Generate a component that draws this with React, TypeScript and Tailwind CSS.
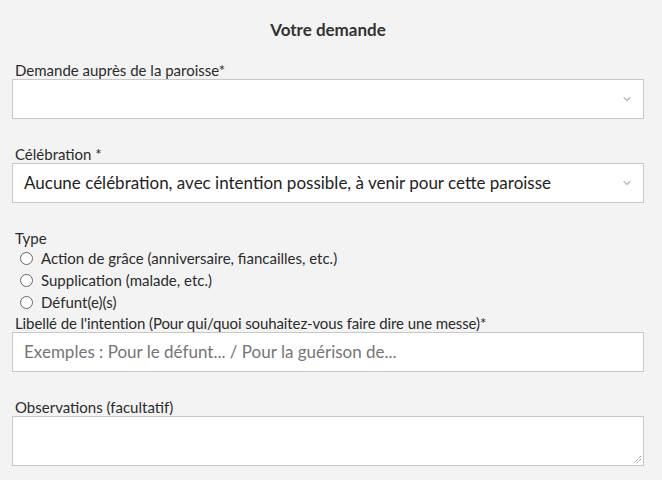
import { ChevronDown } from "lucide-react";

const font = { fontFamily: "Lato, 'Noto Sans', sans-serif" };

function Label({ children, className = "" }: { children: React.ReactNode; className?: string }) {
  return <div className={"h-[18px] text-[15px] leading-[18px] text-[#2b2b2b]" + " " + className}>{children}</div>;
}

function SelectBox({ value }: { value?: string }) {
  return (
    <div className="flex h-[40px] items-center justify-between border border-[#c8c8c8] bg-white pl-[11px] pr-[10px]">
      <span className="text-[17px] text-[#1e1e1e]">{value}</span>
      <ChevronDown className="h-[12px] w-[12px] text-[#bbb]" strokeWidth={2.5} />
    </div>
  );
}

const types = [
  "Action de grâce (anniversaire, fiancailles, etc.)",
  "Supplication (malade, etc.)",
  "Défunt(e)(s)",
];

export default function App() {
  return (
    <div style={font} className="h-[480px] w-[662px] overflow-hidden bg-[#f3f3f3] pl-[12px] pr-[18px]">
      <div className="mt-[20px] h-[20px] text-center text-[17px] font-bold leading-[20px] text-[#333]">
        Votre demande
      </div>

      <Label className="mt-[21px] pl-[3px]">Demande auprès de la paroisse*</Label>
      <SelectBox />

      <Label className="mt-[26px] pl-[3px]">Célébration *</Label>
      <SelectBox value="Aucune célébration, avec intention possible, à venir pour cette paroisse" />

      <Label className="mt-[26px] pl-[3px]">Type</Label>
      <div className="flex flex-col">
        {types.map((t) => (
          <label key={t} className="flex h-[22px] items-center text-[15px] text-[#2b2b2b]">
            <span className="ml-[8px] mr-[8px] h-[13px] w-[13px] rounded-full border border-[#666] bg-white" />
            {t}
          </label>
        ))}
      </div>

      <Label className="mt-[1px] pl-[3px] tracking-[-0.1px]">
        Libellé de l'intention (Pour qui/quoi souhaitez-vous faire dire une messe)*
      </Label>
      <div className="flex h-[40px] items-center border border-[#c8c8c8] bg-white pl-[11px]">
        <span className="text-[17px] text-[#757575]">Exemples : Pour le défunt... / Pour la guérison de...</span>
      </div>

      <Label className="mt-[26px] pl-[3px]">Observations (facultatif)</Label>
      <div className="relative h-[50px] border border-[#c8c8c8] bg-white">
        <svg className="absolute bottom-[1px] right-[1px]" width="9" height="9" viewBox="0 0 9 9">
          <path d="M8 1 L1 8 M8 4 L4 8" stroke="#777" strokeWidth="1" strokeDasharray="1 1" fill="none" />
        </svg>
      </div>
    </div>
  );
}
